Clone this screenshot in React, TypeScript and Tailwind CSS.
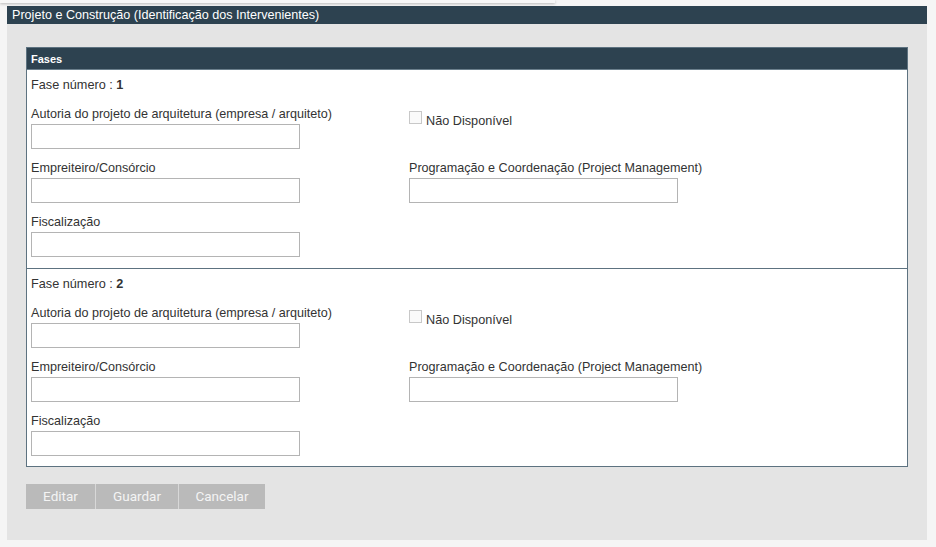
import React from "react";

const phases = [1, 2];

const Field = ({ label, className = "" }: { label: string; className?: string }) => (
  <div className={className}>
    <div className="h-[20px] leading-[20px]">{label}</div>
    <div className="h-[25px] w-[269px] border border-[#b4b4b4] bg-white" />
  </div>
);

const Phase = ({ n, last }: { n: number; last: boolean }) => (
  <div className={`pl-[4px] pr-[5px] pt-[6px] ${last ? "pb-[10px]" : "pb-[11px] border-b border-[#5d7280]"}`}>
    <div className="h-[18px] leading-[18px] text-[12.7px]">
      Fase número : <span className="font-bold">{n}</span>
    </div>
    <div className="mt-[10px] grid grid-cols-[378px_1fr]">
      <div>
        <Field label="Autoria do projeto de arquitetura (empresa / arquiteto)" />
        <Field label="Empreiteiro/Consórcio" className="mt-[9px]" />
        <Field label="Fiscalização" className="mt-[9px]" />
      </div>
      <div>
        <div className="flex items-start h-[45px] pt-[7px]">
          <span className="w-[13px] h-[13px] border border-[#c8c8c8] bg-[#fafafa] mr-[4px]" />
          <span className="text-[12.7px] leading-[18px] mt-[1px]">Não Disponível</span>
        </div>
        <Field label="Programação e Coordenação (Project Management)" className="mt-[9px]" />
      </div>
    </div>
  </div>
);

export default function App() {
  return (
    <div className="w-[936px] h-[547px] bg-[#f5f5f5] font-['Liberation_Sans',Arial,sans-serif] text-[12.6px] text-[#333]">
      <div className="h-[6px] relative">
        <div className="absolute left-0 top-0 w-[555px] h-[3px] shadow-[0_1px_3px_rgba(0,0,0,0.25)] bg-[#f7f7f7]" />
      </div>
      <div className="ml-[7px] w-[920px] h-[534px] bg-[#e4e4e4]">
        <div className="h-[18px] bg-[#2d4250] text-white px-[5px] leading-[18px] text-[12.6px]">
          Projeto e Construção (Identificação dos Intervenientes)
        </div>
        <div className="px-[19px] pt-[23px]">
          <div className="border border-[#5d7280] bg-white">
            <div className="h-[22px] bg-[#2d4250] text-white font-bold text-[11px] leading-[22px] px-[4px] border-b border-[#6b7f8c]">
              Fases
            </div>
            {phases.map((n, i) => (
              <Phase key={n} n={n} last={i === phases.length - 1} />
            ))}
          </div>
          <div className="mt-[17px] flex h-[25px] font-['Roboto',sans-serif] text-[13.5px] text-[#f4f4f4]">
            <button className="w-[70px] bg-[#bababa] border-r border-[#d8d8d8]">Editar</button>
            <button className="w-[83px] bg-[#bababa] border-r border-[#d8d8d8]">Guardar</button>
            <button className="w-[86px] bg-[#bababa]">Cancelar</button>
          </div>
        </div>
      </div>
    </div>
  );
}
